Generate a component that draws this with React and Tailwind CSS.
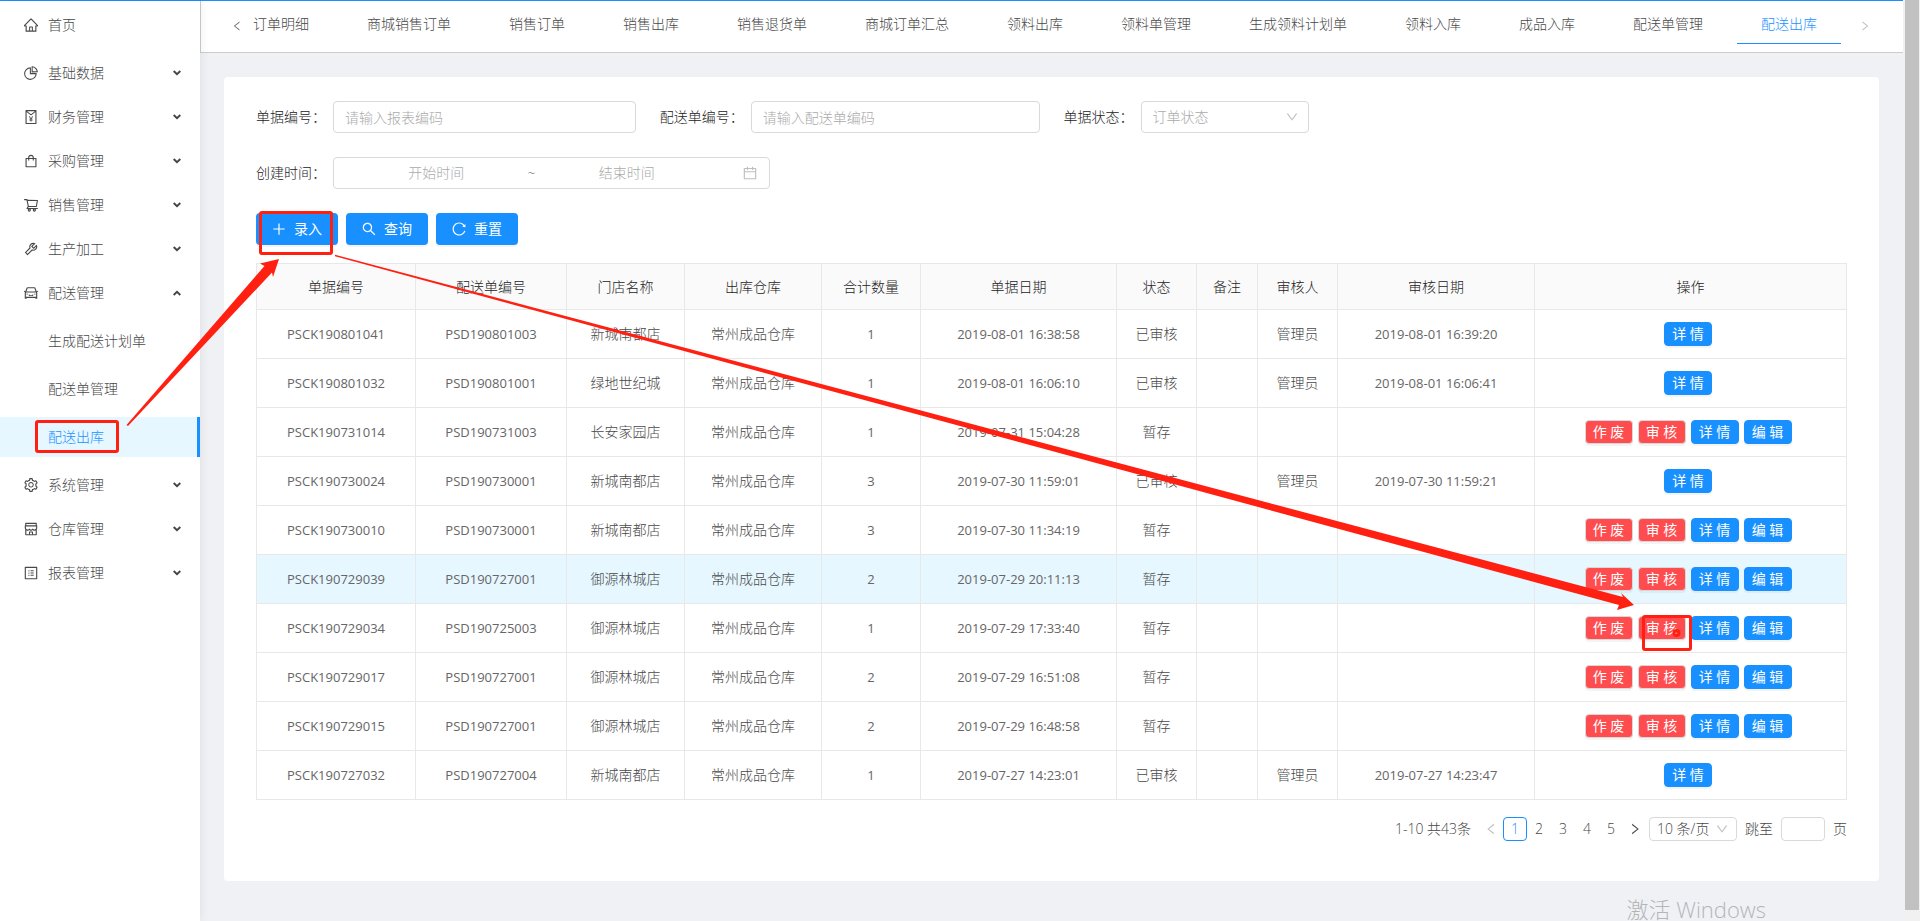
import {
  AiOutlineHome,
  AiOutlinePieChart,
  AiOutlineRedEnvelope,
  AiOutlineShopping,
  AiOutlineShoppingCart,
  AiOutlineTool,
  AiOutlineCar,
  AiOutlineSetting,
  AiOutlineShop,
  AiOutlineProfile,
  AiOutlinePlus,
  AiOutlineSearch,
  AiOutlineReload,
  AiOutlineCalendar,
  AiOutlineLeft,
  AiOutlineRight,
  AiOutlineDown,
} from 'react-icons/ai'

const menus = [
  { title: '基础数据', icon: AiOutlinePieChart },
  { title: '财务管理', icon: AiOutlineRedEnvelope },
  { title: '采购管理', icon: AiOutlineShopping },
  { title: '销售管理', icon: AiOutlineShoppingCart },
  { title: '生产加工', icon: AiOutlineTool },
  { title: '配送管理', icon: AiOutlineCar, children: ['生成配送计划单', '配送单管理', '配送出库'] },
  { title: '系统管理', icon: AiOutlineSetting },
  { title: '仓库管理', icon: AiOutlineShop },
  { title: '报表管理', icon: AiOutlineProfile },
]

const tabs = [
  '订单明细', '商城销售订单', '销售订单', '销售出库', '销售退货单', '商城订单汇总', '领料出库',
  '领料单管理', '生成领料计划单', '领料入库', '成品入库', '配送单管理', '配送出库',
]

const current = '配送出库'

const columns = [
  { title: '单据编号', width: 'w-[159px]' },
  { title: '配送单编号', width: 'w-[151px]' },
  { title: '门店名称', width: 'w-[118px]' },
  { title: '出库仓库', width: 'w-[137px]' },
  { title: '合计数量', width: 'w-[99px]' },
  { title: '单据日期', width: 'w-[196px]' },
  { title: '状态', width: 'w-[80px]' },
  { title: '备注', width: 'w-[61px]' },
  { title: '审核人', width: 'w-[80px]' },
  { title: '审核日期', width: 'w-[197px]' },
  { title: '操作', width: 'w-[312px]' },
]

const rows = [
  { id: 'PSCK190801041', order: 'PSD190801003', shop: '新城南都店', qty: 1, date: '2019-08-01 16:38:58', auditDate: '2019-08-01 16:39:20' },
  { id: 'PSCK190801032', order: 'PSD190801001', shop: '绿地世纪城', qty: 1, date: '2019-08-01 16:06:10', auditDate: '2019-08-01 16:06:41' },
  { id: 'PSCK190731014', order: 'PSD190731003', shop: '长安家园店', qty: 1, date: '2019-07-31 15:04:28' },
  { id: 'PSCK190730024', order: 'PSD190730001', shop: '新城南都店', qty: 3, date: '2019-07-30 11:59:01', auditDate: '2019-07-30 11:59:21' },
  { id: 'PSCK190730010', order: 'PSD190730001', shop: '新城南都店', qty: 3, date: '2019-07-30 11:34:19' },
  { id: 'PSCK190729039', order: 'PSD190727001', shop: '御源林城店', qty: 2, date: '2019-07-29 20:11:13', active: true },
  { id: 'PSCK190729034', order: 'PSD190725003', shop: '御源林城店', qty: 1, date: '2019-07-29 17:33:40' },
  { id: 'PSCK190729017', order: 'PSD190727001', shop: '御源林城店', qty: 2, date: '2019-07-29 16:51:08' },
  { id: 'PSCK190729015', order: 'PSD190727001', shop: '御源林城店', qty: 2, date: '2019-07-29 16:48:58' },
  { id: 'PSCK190727032', order: 'PSD190727004', shop: '新城南都店', qty: 1, date: '2019-07-27 14:23:01', auditDate: '2019-07-27 14:23:47' },
]

function Arrow({ open }) {
  return (
    <svg width="8" height="6" viewBox="0 0 8 6" className={open ? 'rotate-180' : ''}>
      <path d="M0.7 1L4 4.2L7.3 1" fill="none" stroke="#444" strokeWidth="1.9" />
    </svg>
  )
}

function Sidebar() {
  return (
    <aside className="relative z-10 w-[200px] shrink-0 bg-white pt-1 shadow-[2px_0_8px_rgba(0,21,41,0.06)]">
      <nav>
        <a href="#home" className="mb-2 flex h-10 items-center gap-[9px] pl-[23px]">
          <AiOutlineHome className="text-base" />
          首页
        </a>
        {menus.map(({ title, icon: Icon, children }) => (
          <div key={title} className="mb-1">
            <button type="button" className="flex h-10 w-full items-center gap-[9px] pr-[19px] pl-[23px]">
              <Icon className="text-base" />
              <span className="flex-1 text-left">{title}</span>
              <Arrow open={!!children} />
            </button>
            {children && (
              <div className="flex flex-col gap-2 pt-2 pb-1">
                {children.map((name) => (
                  <a
                    key={name}
                    href={`#${name}`}
                    className={`flex h-10 items-center pl-12 ${
                      name === current ? 'border-r-3 border-[#1890ff] bg-[#e6f7ff] text-[#1890ff]' : ''
                    }`}
                  >
                    {name}
                  </a>
                ))}
              </div>
            )}
          </div>
        ))}
      </nav>
    </aside>
  )
}

function TabBar() {
  return (
    <header className="flex h-[52px] items-start border-b border-l border-[#ccc] bg-white pr-[22px] pl-5">
      <button type="button" aria-label="上一页" className="flex h-[50px] w-8 shrink-0 items-center justify-center text-xs text-[#777]">
        <AiOutlineLeft />
      </button>
      <div className="flex-1 overflow-hidden">
        <div className="-ml-6 flex gap-2.5">
          {tabs.map((tab) => (
            <a
              key={tab}
              href={`#${tab}`}
              className={`flex h-[43px] shrink-0 items-center border-b px-6 pt-1 ${
                tab === current ? 'border-[#1890ff] text-[#1890ff]' : 'border-transparent'
              }`}
            >
              {tab}
            </a>
          ))}
        </div>
      </div>
      <button type="button" aria-label="下一页" className="flex h-[50px] w-8 shrink-0 items-center justify-center text-xs text-[#bbb]">
        <AiOutlineRight />
      </button>
    </header>
  )
}

const box = 'rounded border border-[#d9d9d9] bg-white'

function SearchForm() {
  return (
    <form className="text-[#222]">
      <div className="grid grid-cols-4 gap-6">
        <div className="flex items-center gap-[7px]">
          <label htmlFor="code" className="shrink-0">单据编号：</label>
          <input id="code" placeholder="请输入报表编码" className={`${box} h-8 min-w-0 flex-1 px-[11px] placeholder:text-[#aaa]`} />
        </div>
        <div className="flex items-center gap-[7px]">
          <label htmlFor="order" className="shrink-0">配送单编号：</label>
          <input id="order" placeholder="请输入配送单编码" className={`${box} h-8 min-w-0 flex-1 px-[11px] placeholder:text-[#aaa]`} />
        </div>
        <div className="flex items-center gap-[7px]">
          <label htmlFor="status" className="shrink-0">单据状态：</label>
          <div className="relative w-[168px]">
            <select id="status" className={`${box} block h-8 w-full appearance-none px-[11px] text-[#aaa]`}>
              <option>订单状态</option>
            </select>
            <AiOutlineDown className="pointer-events-none absolute top-[9px] right-2.5 text-sm text-[#bfbfbf]" />
          </div>
        </div>
        <div className="col-span-4 flex items-center gap-[7px]">
          <label htmlFor="start" className="shrink-0">创建时间：</label>
          <div className={`${box} flex h-8 w-[437px] items-center px-[11px]`}>
            <input id="start" placeholder="开始时间" className="min-w-0 flex-1 text-center placeholder:text-[#aaa]" />
            <span className="text-[#666]">~</span>
            <input aria-label="结束时间" placeholder="结束时间" className="min-w-0 flex-1 text-center placeholder:text-[#aaa]" />
            <AiOutlineCalendar className="ml-6 text-base text-[#bfbfbf]" />
          </div>
        </div>
      </div>
      <div className="mt-6 flex gap-2">
        <PrimaryButton icon={AiOutlinePlus}>录入</PrimaryButton>
        <PrimaryButton icon={AiOutlineSearch}>查询</PrimaryButton>
        <PrimaryButton icon={AiOutlineReload}>重置</PrimaryButton>
      </div>
    </form>
  )
}

function PrimaryButton({ icon: Icon, children }) {
  return (
    <button type="button" className="flex h-8 items-center gap-[7px] rounded bg-[#1890ff] pr-4 pl-[15px] font-normal text-white shadow-[0_2px_0_rgba(0,0,0,0.045)]">
      <Icon className="text-base" />
      {children}
    </button>
  )
}

function SmallButton({ danger, children }) {
  return (
    <button
      type="button"
      className={`mr-[5px] h-6 w-12 rounded border font-normal text-white shadow-[0_2px_0_rgba(0,0,0,0.045)] ${
        danger ? 'border-[#d9d9d9] bg-[#ff4d4f]' : 'border-[#1890ff] bg-[#1890ff]'
      }`}
    >
      {children}
    </button>
  )
}

function DataTable() {
  const cell = 'border border-[#e8e8e8]'
  const latin = 'border border-[#e8e8e8] text-[13px] font-normal text-[#666]'
  return (
    <table className="mt-[18px] w-full table-fixed border-collapse text-center">
      <thead>
        <tr className="h-[46px] bg-[#fafafa] text-[#222]">
          {columns.map((col) => (
            <th key={col.title} className={`${col.width} border border-[#e8e8e8] font-light`}>{col.title}</th>
          ))}
        </tr>
      </thead>
      <tbody>
        {rows.map((row) => (
          <tr key={row.id} className={`h-[49px] ${row.active ? 'bg-[#e6f7ff]' : ''}`}>
            <td className={latin}>{row.id}</td>
            <td className={latin}>{row.order}</td>
            <td className={cell}>{row.shop}</td>
            <td className={cell}>常州成品仓库</td>
            <td className={latin}>{row.qty}</td>
            <td className={latin}>{row.date}</td>
            <td className={cell}>{row.auditDate ? '已审核' : '暂存'}</td>
            <td className={cell}></td>
            <td className={cell}>{row.auditDate ? '管理员' : ''}</td>
            <td className={latin}>{row.auditDate}</td>
            <td className={cell}>
              <div className="flex justify-center">
                {!row.auditDate && <SmallButton danger>作 废</SmallButton>}
                {!row.auditDate && <SmallButton danger>审 核</SmallButton>}
                <SmallButton>详 情</SmallButton>
                {!row.auditDate && <SmallButton>编 辑</SmallButton>}
              </div>
            </td>
          </tr>
        ))}
      </tbody>
    </table>
  )
}

function Pagination() {
  return (
    <div className="mt-[17px] flex h-6 items-center justify-end">
      <span className="mr-2">1-10 共43条</span>
      <button type="button" aria-label="上一页" className="flex w-6 justify-center text-sm text-[#bfbfbf]">
        <AiOutlineLeft />
      </button>
      {[1, 2, 3, 4, 5].map((n) => (
        <button
          key={n}
          type="button"
          className={`h-6 w-6 rounded border ${n === 1 ? 'border-[#1890ff] text-[#1890ff]' : 'border-transparent'}`}
        >
          {n}
        </button>
      ))}
      <button type="button" aria-label="下一页" className="flex w-6 justify-center text-sm">
        <AiOutlineRight />
      </button>
      <div className="relative ml-0.5 w-[88px]">
        <select aria-label="每页条数" className={`${box} block h-6 w-full appearance-none pl-[7px]`}>
          <option>10 条/页</option>
        </select>
        <AiOutlineDown className="pointer-events-none absolute top-[5px] right-2 text-sm text-[#bfbfbf]" />
      </div>
      <label htmlFor="jump" className="ml-2">跳至</label>
      <input id="jump" className={`${box} mx-2 h-6 w-11`} />
      <span>页</span>
    </div>
  )
}

// Red boxes and arrows that walk through 配送出库 -> 录入 -> 审核
function Guide() {
  return (
    <svg className="pointer-events-none absolute top-0 left-0 z-20" width="1720" height="700" viewBox="0 0 1720 700">
      <g fill="none" stroke="#ff2012" strokeWidth="3">
        <rect x="36.5" y="421.5" width="81" height="30" rx="1.5" />
        <rect x="260.5" y="212.5" width="71" height="41" rx="1.5" />
        <rect x="1643.5" y="616.5" width="47" height="33" rx="1.5" />
        <circle cx="1676.5" cy="633" r="2.5" />
      </g>
      <g fill="#ff2012">
        <path d="M126.5 425L264.5 266L260 263.5L279 259L273 277L272 272.5L128 426Z" />
        <path d="M335 254.8L1623 597L1621 593L1634 605L1617 610L1619 605L335 256.2Z" />
      </g>
    </svg>
  )
}

export default function App() {
  return (
    <div className="relative flex min-h-screen overflow-hidden bg-[#f0f1f5] font-['Open_Sans','Noto_Sans_CJK_SC',sans-serif] text-sm font-light text-[#484848]">
      <div className="flex min-w-0 flex-1 border-t border-[#1890ff]">
        <Sidebar />
        <div className="min-w-0 flex-1">
          <TabBar />
          <main className="m-6 rounded-sm bg-white px-8 pt-6 pb-10">
            <SearchForm />
            <DataTable />
            <Pagination />
          </main>
        </div>
      </div>
      <div className="w-[17px] shrink-0 bg-[#f1f1f1] pb-[11px] pl-0.5">
        <div className="h-full w-3.5 bg-[#c1c1c1]" />
      </div>
      <Guide />
      <div className="pointer-events-none absolute right-[154px] bottom-0 text-[22px] leading-6 text-[#b4b5b9]">激活 Windows</div>
    </div>
  )
}
